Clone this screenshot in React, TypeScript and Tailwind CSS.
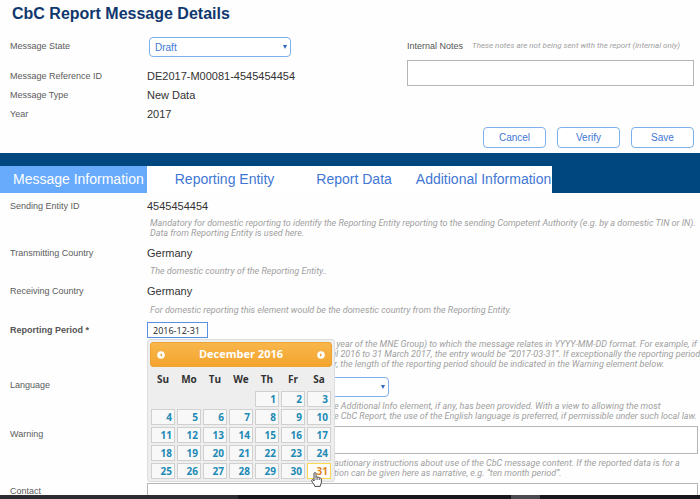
import { useState } from "react";
import type { ReactNode } from "react";

const tabs = [
  { label: "Message Information", className: "bg-[#68aafc] pl-[13px] pr-[3px] text-white" },
  { label: "Reporting Entity", className: "bg-white px-[28px] text-[#4177d4]" },
  { label: "Report Data", className: "bg-white pl-[14px] pr-[12px] text-[#4177d4]" },
  { label: "Additional Information", className: "bg-white pl-[12px] pr-[1px] text-[#4177d4]" },
];

const weekdays = ["Su", "Mo", "Tu", "We", "Th", "Fr", "Sa"];

const weeks = [
  [0, 0, 0, 0, 1, 2, 3],
  [4, 5, 6, 7, 8, 9, 10],
  [11, 12, 13, 14, 15, 16, 17],
  [18, 19, 20, 21, 22, 23, 24],
  [25, 26, 27, 28, 29, 30, 31],
];

function Hint({ lines, className }: { lines: string[]; className: string }) {
  return (
    <div className={"font-[Roboto,sans-serif] text-[9px] leading-[10px] italic whitespace-nowrap text-[#a0a0a0] " + className}>
      {lines.map((line) => (
        <p key={line}>{line}</p>
      ))}
    </div>
  );
}

function Row({ label, htmlFor, bold, children }: { label: string; htmlFor?: string; bold?: boolean; children: ReactNode }) {
  return (
    <div className="grid grid-cols-[137px_1fr]">
      <label
        htmlFor={htmlFor}
        className={"text-[9px] leading-[16px] " + (bold ? "font-bold text-[#555]" : "text-[#5c5c5c]")}
      >
        {label}
      </label>
      <div className="relative min-w-0">{children}</div>
    </div>
  );
}

function Select({ id, value, options, className }: { id: string; value: string; options: string[]; className: string }) {
  return (
    <div className={"relative h-[20px] " + className}>
      <select
        id={id}
        defaultValue={value}
        className="block h-full w-full appearance-none rounded-[4px] border border-[#7fb0ee] bg-white pl-[5px] text-[10px] text-[#4177d4]"
      >
        {options.map((option) => (
          <option key={option}>{option}</option>
        ))}
      </select>
      <svg className="pointer-events-none absolute top-[8px] right-[4px]" width="4" height="4" viewBox="0 0 4 4">
        <path d="M0 0h4L2 4z" fill="#2f66c4" />
      </svg>
    </div>
  );
}

function ArrowIcon({ flip }: { flip?: boolean }) {
  return (
    <svg width="8" height="8" viewBox="0 0 8 8" className={flip ? "rotate-180" : ""}>
      <circle cx="4" cy="4" r="3.8" fill="#fff" />
      <path d="M5 2.4v3.2L2.8 4z" fill="#f0a030" />
    </svg>
  );
}

function DatePicker() {
  const [selected, setSelected] = useState(31);

  return (
    <div className="absolute top-[17px] left-0 z-10 w-[188px] rounded-[3px] border border-[#ddd] bg-[#eee] p-[2px] pb-[1px] font-['Open_Sans',sans-serif] font-bold">
      <div className="flex h-[25px] items-center justify-between rounded-[3px] border border-[#eda435] bg-linear-to-b from-[#f8b64b] to-[#f4a52c] px-[6px] text-[11px] text-white">
        <button type="button" aria-label="Previous month">
          <ArrowIcon />
        </button>
        <span>December 2016</span>
        <button type="button" aria-label="Next month">
          <ArrowIcon flip />
        </button>
      </div>
      <table className="w-full table-fixed border-collapse text-[10px] leading-[14px]">
        <thead>
          <tr>
            {weekdays.map((day) => (
              <th key={day} className="h-[23px] text-[#333]">
                {day}
              </th>
            ))}
          </tr>
        </thead>
        <tbody>
          {weeks.map((week) => (
            <tr key={week[6]}>
              {week.map((day, i) => (
                <td key={i} className="h-[18px] p-px">
                  {day > 0 && (
                    <button
                      type="button"
                      onClick={() => setSelected(day)}
                      className={
                        "block h-[16px] w-full border pr-[2px] text-right leading-[14px] " +
                        (day === selected
                          ? "border-[#fbd850] bg-[#fffdf5] text-[#dd8426]"
                          : "border-[#d0d0d0] bg-[#f8f8f8] text-[#2089b5]")
                      }
                    >
                      {day}
                    </button>
                  )}
                </td>
              ))}
            </tr>
          ))}
        </tbody>
      </table>
      <svg className="pointer-events-none absolute right-[12px] -bottom-[6px]" width="11" height="15" viewBox="0 0 11 15">
        <path
          d="M3 9V1.6C3 .2 5 .2 5 1.6V5.2C5.2 4.4 6.8 4.6 6.8 5.6 7.2 5 8.6 5.2 8.6 6.2 9.2 5.8 10.4 6 10.4 7.2V10.2C10.4 11.6 9.4 12.2 9.2 14.4H3.8C3.6 12.6 1.6 11.2.7 8.8.4 7.8 1.6 7.2 2.2 8z"
          fill="#fff"
          stroke="#333"
          strokeWidth="0.9"
        />
        <path d="M5 5.2V8M6.8 5.8V8M8.6 6.4V8" stroke="#333" strokeWidth="0.7" />
      </svg>
    </div>
  );
}

export default function App() {
  const [period, setPeriod] = useState("2016-12-31");

  return (
    <div className="flex h-screen flex-col overflow-hidden bg-[#fefefe] font-['Liberation_Sans',Arial,sans-serif]">
      <header className="shrink-0 pt-[4px] pr-[6px] pb-[5px] pl-[10px]">
        <h1 className="pl-[2px] text-[16px] leading-[20px] font-bold text-[#10386e]">CbC Report Message Details</h1>
        <div className="mt-[13px] flex justify-between">
          <div>
            <div className="grid grid-cols-[137px_1fr] items-center">
              <label htmlFor="state" className="text-[9px] text-[#5c5c5c]">
                Message State
              </label>
              <Select id="state" value="Draft" options={["Draft", "Final"]} className="ml-[2px] w-[142px]" />
            </div>
            <dl className="mt-[10px] grid grid-cols-[137px_1fr] text-[11px] leading-[19px] text-[#333]">
              <dt className="text-[9px] text-[#5c5c5c]">Message Reference ID</dt>
              <dd>DE2017-M00081-4545454454</dd>
              <dt className="text-[9px] text-[#5c5c5c]">Message Type</dt>
              <dd>New Data</dd>
              <dt className="text-[9px] text-[#5c5c5c]">Year</dt>
              <dd>2017</dd>
            </dl>
          </div>
          <div className="w-[287px]">
            <div className="flex h-[20px] items-center justify-between pr-[14px] whitespace-nowrap">
              <label htmlFor="notes" className="text-[9px] text-[#555]">
                Internal Notes
              </label>
              <span className="pb-[2px] font-[Roboto,sans-serif] text-[8px] text-[#a0a0a0] italic">
                These notes are not being sent with the report (internal only)
              </span>
            </div>
            <textarea
              id="notes"
              className="mt-[3px] block h-[26px] w-full resize-none border border-[#b5b5b5] bg-white"
            />
            <div className="mt-[41px] flex justify-end gap-[11px]">
              {["Cancel", "Verify", "Save"].map((action) => (
                <button
                  key={action}
                  type="button"
                  className="h-[21px] w-[63px] rounded-[4px] border border-[#7fb0ee] bg-white text-[10px] text-[#4177d4]"
                >
                  {action}
                </button>
              ))}
            </div>
          </div>
        </div>
      </header>

      <nav className="flex shrink-0 bg-[#00467f] pt-[13px]">
        {tabs.map((tab) => (
          <button key={tab.label} type="button" className={"h-[27px] text-[14px] " + tab.className}>
            {tab.label}
          </button>
        ))}
      </nav>

      <main className="min-h-0 flex-1 overflow-hidden pt-[5px] pr-[2px] pl-[10px]">
        <div className="flex flex-col gap-[7px]">
          <Row label="Sending Entity ID">
            <p className="text-[11px] leading-[16px] text-[#333]">4545454454</p>
            <Hint
              className="mt-[4px] pl-[3px]"
              lines={[
                "Mandatory for domestic reporting to identify the Reporting Entity reporting to the sending Competent Authority (e.g. by a domestic TIN or IN).",
                "Data from Reporting Entity is used here.",
              ]}
            />
          </Row>
          <Row label="Transmitting Country">
            <p className="text-[11px] leading-[16px] text-[#333]">Germany</p>
            <Hint className="mt-[5px] pl-[3px]" lines={["The domestic country of the Reporting Entity.."]} />
          </Row>
          <Row label="Receiving Country">
            <p className="text-[11px] leading-[16px] text-[#333]">Germany</p>
            <Hint
              className="mt-[6px] pl-[3px]"
              lines={["For domestic reporting this element would be the domestic country from the Reporting Entity."]}
            />
          </Row>
          <Row label="Reporting Period *" htmlFor="period" bold>
            <input
              id="period"
              value={period}
              onChange={(e) => setPeriod(e.target.value)}
              className="block h-[16px] w-[61px] border border-[#5b8fe0] bg-white pl-[5px] font-['Open_Sans',sans-serif] text-[9px] text-[#222]"
            />
            <Hint
              className="mt-[1px] pl-[187px]"
              lines={[
                "\u00a0year of the MNE Group) to which the message relates in YYYY-MM-DD format. For example, if",
                "il 2016 to 31 March 2017, the entry would be “2017-03-31”. If exceptionally the reporting period",
                "r, the length of the reporting period should be indicated in the Warning element below.",
              ]}
            />
            <DatePicker />
          </Row>
        </div>
        <div className="mt-[8px] flex flex-col gap-[5px]">
          <Row label="Language" htmlFor="language">
            <Select id="language" value="" options={["", "English", "German"]} className="w-[242px]" />
            <Hint
              className="mt-[4px] pl-[187px]"
              lines={[
                "e Additional Info element, if any, has been provided. With a view to allowing the most",
                "e CbC Report, the use of the English language is preferred, if permissible under such local law.",
              ]}
            />
          </Row>
          <Row label="Warning" htmlFor="warning">
            <textarea id="warning" className="block h-[28px] w-full resize-none border border-[#b5b5b5] bg-white" />
            <Hint
              className="mt-[4px] pl-[187px]"
              lines={[
                "autionary instructions about use of the CbC message content. If the reported data is for a",
                "tion can be given here as narrative, e.g. “ten month period”.",
              ]}
            />
          </Row>
          <Row label="Contact" htmlFor="contact">
            <textarea id="contact" className="block h-[28px] w-full resize-none border border-[#b5b5b5] bg-white" />
          </Row>
        </div>
      </main>

      <footer className="flex h-[4px] shrink-0 bg-[#17181b]">
        <div className="w-[34%] bg-[#2c2d31]" />
        <div className="ml-[39%] w-[29px] bg-[#4a4b4f]" />
      </footer>
    </div>
  );
}
